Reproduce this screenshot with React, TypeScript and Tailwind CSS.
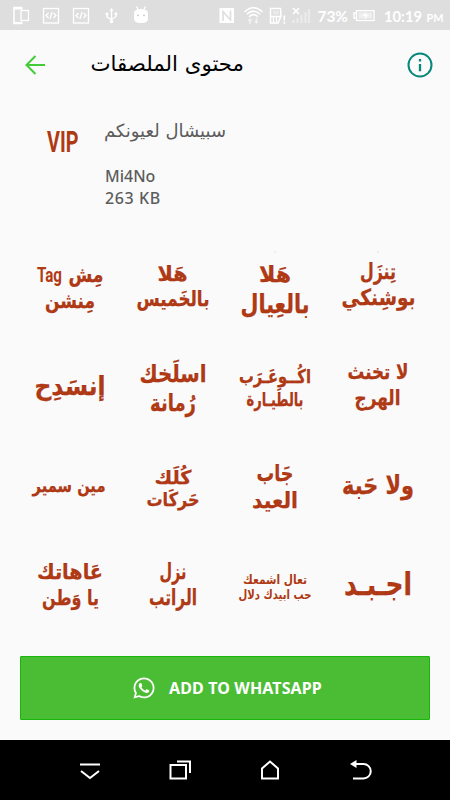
import React from 'react';
import { FaWhatsapp } from 'react-icons/fa';

interface StickerLine {
    text: string;
    x: number;
    y: number;
    width: number;
    size: number;
    latin?: boolean;
}

// Coordinates are inside a 102.5 x 100 sticker cell, x is the middle of the line
const stickers: StickerLine[][] = [
    [
        { text: 'Tag', x: 29.5, y: 44, width: 25, size: 21, latin: true },
        { text: 'مِش', x: 66, y: 44, width: 35, size: 21 },
        { text: 'مِنشن', x: 50, y: 70, width: 50, size: 21 },
    ],
    [
        { text: 'هَلا', x: 49.5, y: 43, width: 30, size: 21 },
        { text: 'بالخَميس', x: 50, y: 68, width: 73, size: 21 },
    ],
    [
        { text: 'هَلا', x: 50, y: 44, width: 32, size: 22 },
        { text: 'بالعِيال', x: 50, y: 75, width: 69, size: 26 },
    ],
    [
        { text: 'تِنزَل', x: 50, y: 41, width: 36, size: 22 },
        { text: 'بوشِنكي', x: 50.5, y: 67, width: 74, size: 22 },
    ],
    [{ text: 'إنسَدِح', x: 50, y: 57, width: 71, size: 26 }],
    [
        { text: 'اسلَخك', x: 50, y: 44, width: 67, size: 24 },
        { text: 'رُمانة', x: 50, y: 73, width: 46, size: 24 },
    ],
    [
        { text: 'اكُــوعَـرَب', x: 50, y: 45, width: 72, size: 19 },
        { text: 'بالطَيـارة', x: 50, y: 68, width: 57, size: 19 },
    ],
    [
        { text: 'لا تخنث', x: 50, y: 41, width: 61, size: 21 },
        { text: 'الهرج', x: 49.5, y: 67, width: 46, size: 21 },
    ],
    [{ text: 'مين سمير', x: 49, y: 54, width: 73, size: 18 }],
    [
        { text: 'كُلَك', x: 50, y: 46, width: 37, size: 19 },
        { text: 'حَركَات', x: 50, y: 68, width: 53, size: 19 },
    ],
    [
        { text: 'جَاب', x: 50, y: 43, width: 37, size: 23 },
        { text: 'العيد', x: 50, y: 70, width: 46, size: 22 },
    ],
    [{ text: 'ولا حَبة', x: 50, y: 56, width: 72, size: 26 }],
    [
        { text: 'عَاهاتك', x: 50, y: 41, width: 66, size: 21 },
        { text: 'يا وَطن', x: 50.5, y: 67, width: 57, size: 21 },
    ],
    [
        { text: 'نزل', x: 50, y: 41, width: 27, size: 22 },
        { text: 'الراتب', x: 50, y: 67, width: 48, size: 22 },
    ],
    [
        { text: 'تعال اشمعك', x: 50, y: 46, width: 64, size: 13 },
        { text: 'حب ابيدك دلال', x: 50, y: 61, width: 73, size: 13 },
    ],
    [{ text: 'اجـبـد', x: 50, y: 57, width: 68, size: 31 }],
];

const Sticker: React.FC<{ lines: StickerLine[]; speck?: boolean }> = ({ lines, speck }) => (
    <svg viewBox="0 0 102.5 100" className="w-full h-[100px] overflow-visible">
        {speck && <circle cx="50" cy="14" r=".8" fill="#dcdcdc" />}
        {lines.map((line) => (
            <text
                key={line.text}
                x={line.x}
                y={line.y}
                fontSize={line.size}
                textLength={line.width}
                lengthAdjust="spacingAndGlyphs"
                textAnchor="middle"
                direction={line.latin ? 'ltr' : 'rtl'}
                strokeWidth={line.latin || line.size < 15 ? 0 : 0.25}
                className={`font-bold fill-[#af3a14] stroke-[#a51c0a] ${line.latin ? "font-['Roboto',sans-serif]" : "font-['DejaVu_Sans',sans-serif]"}`}
            >
                {line.text}
            </text>
        ))}
    </svg>
);

const StatusBar: React.FC = () => (
    <div className="h-[30px] bg-[#dedede] text-white">
        <svg width="450" height="30" viewBox="0 0 450 30" fill="none" stroke="currentColor" strokeWidth="1.3">
            {/* Devices */}
            <path d="M21.5 9.5v-2H14v16h7.5v-2" strokeWidth="1.5" />
            <path d="M13.5 8.5h9M13.5 23h9" strokeWidth="2" />
            <rect x="21" y="10.5" width="7.5" height="10" />
            {/* Developer options */}
            {[43.5, 73.5].map((x) => (
                <g key={x}>
                    <rect x={x} y="8.5" width="15" height="14.5" />
                    <path d={`M${x + 5} 13l-2.5 2.5 2.5 2.5M${x + 10} 13l2.5 2.5-2.5 2.5M${x + 8.5} 12l-2 7`} />
                </g>
            ))}
            {/* USB */}
            <path d="M111.5 10v11M107 14v3l4.5 2.5 4.500-3v-3" />
            <path d="M111.5 8l2 3h-4z" fill="currentColor" stroke="none" />
            <circle cx="111.5" cy="21.5" r="1.8" fill="currentColor" stroke="none" />
            <circle cx="107" cy="14" r="1.5" fill="currentColor" stroke="none" />
            <rect x="114.7" y="12.5" width="2.5" height="2.5" fill="currentColor" stroke="none" />
            {/* Android head */}
            <path d="M134 13.5q0-4.5 7-4.5t7 4.5v5q0 4.5-7 4.5t-7-4.5z" fill="currentColor" stroke="none" />
            <path d="M136.5 6.5l1.5 3M145.5 6.5l-1.5 3" />
            <circle cx="138" cy="15.3" r=".9" fill="#c6c6c6" stroke="none" />
            <circle cx="144" cy="15.3" r=".9" fill="#c6c6c6" stroke="none" />
            {/* NFC */}
            <rect x="219.5" y="8" width="14.5" height="15" fill="currentColor" stroke="none" />
            <path d="M223 21v-9.5l7.5 8.5v-9.5" stroke="#dedede" strokeWidth="1.6" />
            {/* Wifi */}
            <path d="M244.5 12q9-8.500 18 0M246.8 14.3q6.700-6.300 13.400 0M249 16.7q4.500-4.200 9 0" strokeWidth="1.5" />
            <path d="M250 18l2.5 2.8h-1.7V24h-1.600v-3.200h-1.700zM256.5 24l-2.500-2.800h1.700V18h1.600v3.200h1.700z" fill="currentColor" stroke="none" opacity=".6" />
            {/* SIM warning */}
            <path d="M270.5 8.5h10l.5 7.5-3 7h-7.500z" strokeWidth="1.5" />
            <path d="M273 10.500h6v4h-6z" fill="#e9e9e9" stroke="none" />
            <path d="M270 16.500h11M273.5 17v6M276.5 17v6" />
            <path d="M284.3 15.5v5M284.3 21.8v2" strokeWidth="1.7" />
            {/* No signal */}
            <path d="M293 8l6 6M299 8l-6 6" strokeWidth="1.7" />
            <path d="M293.5 23v-3M297.5 23v-5M301.5 23v-8M305.5 23V12M309 23V9" strokeWidth="2.2" opacity=".4" />
            {/* Battery */}
            <rect x="356.5" y="10.7" width="17.5" height="9.8" />
            <rect x="358.5" y="12.5" width="13.5" height="6.2" fill="currentColor" stroke="none" opacity=".5" />
            <path d="M356 13h-2v5h2" />
            <path d="M366.5 11.5l-4 4.500h3l-1.5 4 4.500-5.300h-3z" fill="#fff" stroke="none" />
            <g fill="currentColor" stroke="none" className="font-['Lato',sans-serif] font-bold">
                <text x="317.5" y="21.5" fontSize="15.5" textLength="30.5" lengthAdjust="spacingAndGlyphs">73%</text>
                <text x="384" y="21.5" fontSize="16" textLength="38" lengthAdjust="spacingAndGlyphs">10:19</text>
                <text x="426.5" y="21.5" fontSize="11" textLength="17" lengthAdjust="spacingAndGlyphs">PM</text>
            </g>
        </svg>
    </div>
);

const AppBar: React.FC = () => (
    <header className="h-[70px] flex items-center px-5">
        <svg className="ml-[5px] w-5 h-5 shrink-0" viewBox="0 0 20 20" fill="none" stroke="#43cc35" strokeWidth="2">
            <path d="M20 10H1.8M10.5 1l-9 9 9 9" />
        </svg>
        <h1 dir="rtl" className="ml-[45px] w-[154px] pb-[3px] whitespace-nowrap text-[21.3px] leading-[30px] text-black font-['DejaVu_Sans',sans-serif]">
            محتوى الملصقات
        </h1>
        <svg className="ml-auto mr-[-3px] w-[26px] h-[26px]" viewBox="0 0 26 26" fill="none" stroke="#07887a" strokeWidth="2">
            <circle cx="13" cy="13" r="11.5" />
            <path d="M13 12v7.2M13 7v2.4" strokeWidth="2.3" />
        </svg>
    </header>
);

const PackDetails: React.FC = () => (
    <section className="h-[138px] flex pt-4 text-[#5c5c5c]">
        <div className="w-[105px] pl-[40px] pt-1">
            <svg width="46" height="42" viewBox="0 0 46 42" className="overflow-visible">
                <text x="7" y="32" fontSize="29" textLength="31.5" lengthAdjust="spacingAndGlyphs" className="font-['Roboto',sans-serif] font-bold fill-[#ae3a14]">
                    VIP
                </text>
            </svg>
        </div>
        <div className="font-['Noto_Sans',sans-serif] font-medium">
            <p dir="rtl" className="h-[49px] w-[121px] pt-px whitespace-nowrap text-[18px] leading-[28px] font-normal font-['DejaVu_Sans',sans-serif]">
                سبيشال لعيونكم
            </p>
            <p className="text-[16px] leading-[22px]">Mi4No</p>
            <p className="text-[16px] leading-[22px] tracking-[0.6px]">263 KB</p>
        </div>
    </section>
);

const NavBar: React.FC = () => (
    <nav className="h-[60px] bg-black text-white">
        <svg width="450" height="60" viewBox="0 0 450 60" fill="none" stroke="currentColor" strokeWidth="2">
            <path d="M80 24.5h20M81 31l9 7 9-7" />
            <path d="M170.5 25H186v13.5h-15.5zM177 21.5h13V33" />
            <path d="M262 38.5v-10l8-7 8 7v10z" />
            <path d="M353 38.5h10.5a7 7 0 0 0 0-14.500H355" />
            <path d="M350 24l6.5-4v8z" fill="currentColor" stroke="none" />
        </svg>
    </nav>
);

const App: React.FC = () => {
    return (
        <div className="w-[450px] h-[800px] flex flex-col overflow-hidden bg-[#fafafa]">
            <StatusBar />
            <AppBar />
            <PackDetails />

            {/* Stickers Grid */}
            <main className="grid grid-cols-4 px-5">
                {stickers.map((lines, idx) => (
                    <Sticker key={idx} lines={lines} speck={idx === 2 || idx === 3} />
                ))}
            </main>

            {/* Add Button */}
            <div className="flex-1 px-5 pt-[18px]">
                <button className="w-full h-16 flex items-center justify-center gap-[13px] pl-1 rounded-[1px] border border-[#16b60b] bg-[#4bbd35] text-white">
                    <FaWhatsapp className="w-6 h-6" />
                    <span className="whitespace-nowrap text-[16px] leading-6 font-bold tracking-[0.12px] font-['Noto_Sans',sans-serif]">ADD TO WHATSAPP</span>
                </button>
            </div>

            <NavBar />
        </div>
    );
};

export default App;
